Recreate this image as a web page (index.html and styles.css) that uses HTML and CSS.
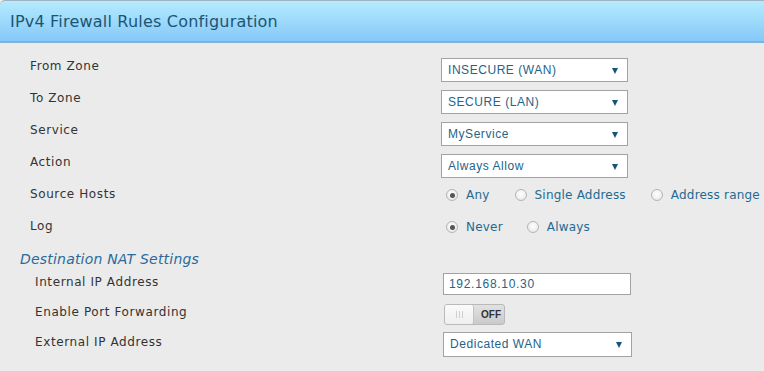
FILE: index.html
```html
<!DOCTYPE html>
<html>
<head>
<meta charset="utf-8">
<link rel="stylesheet" href="styles.css">
</head>
<body>
<div class="panel">
  <div class="header"><h1 class="title">IPv4 Firewall Rules Configuration</h1></div>
  <div class="form">
    <div class="row">
      <div class="label">From Zone</div>
      <div class="ctl"><div class="select"><span>INSECURE (WAN)</span><i class="arrow"></i></div></div>
    </div>
    <div class="row">
      <div class="label">To Zone</div>
      <div class="ctl"><div class="select"><span>SECURE (LAN)</span><i class="arrow"></i></div></div>
    </div>
    <div class="row">
      <div class="label">Service</div>
      <div class="ctl"><div class="select"><span>MyService</span><i class="arrow"></i></div></div>
    </div>
    <div class="row">
      <div class="label">Action</div>
      <div class="ctl"><div class="select"><span>Always Allow</span><i class="arrow"></i></div></div>
    </div>
    <div class="row row-radio">
      <div class="label">Source Hosts</div>
      <div class="ctl radios">
        <label class="radio r-any"><i class="dot checked"></i>Any</label>
        <label class="radio r-single"><i class="dot"></i>Single Address</label>
        <label class="radio"><i class="dot"></i>Address range</label>
      </div>
    </div>
    <div class="row row-radio">
      <div class="label">Log</div>
      <div class="ctl radios">
        <label class="radio r-never"><i class="dot checked"></i>Never</label>
        <label class="radio"><i class="dot"></i>Always</label>
      </div>
    </div>
  </div>
  <h2 class="section">Destination NAT Settings</h2>
  <div class="form form2">
    <div class="row2">
      <div class="label">Internal IP Address</div>
      <div class="ctl2"><div class="input">192.168.10.30</div></div>
    </div>
    <div class="row2">
      <div class="label">Enable Port Forwarding</div>
      <div class="ctl2">
        <div class="toggle"><span class="knob"><i></i><i></i><i></i></span><span class="off">OFF</span></div>
      </div>
    </div>
    <div class="row2">
      <div class="label">External IP Address</div>
      <div class="ctl2"><div class="select select2"><span>Dedicated WAN</span><i class="arrow"></i></div></div>
    </div>
  </div>
</div>
</body>
</html>
```

FILE: styles.css
```css
html, body {
  margin: 0;
  padding: 0;
  background: #ebebeb;
}
body {
  width: 764px;
  height: 371px;
  overflow: hidden;
  font-family: "DejaVu Sans", Verdana, sans-serif;
}
.panel {
  width: 800px;
}
.header {
  height: 40px;
  border-top: 1px solid #9fb3c2;
  border-bottom: 2px solid #7fb3d8;
  border-top-left-radius: 5px;
  background: linear-gradient(to bottom, #b4ebfd 0%, #86c8f9 100%);
  display: flex;
  align-items: center;
}
.title {
  margin: 0 0 0 10px;
  font-weight: normal;
  font-size: 16px;
  letter-spacing: 0.2px;
  color: #1b5574;
}
.form {
  padding: 11px 0 0 30px;
}
.row {
  display: flex;
  align-items: center;
  height: 32px;
}
.label {
  width: 411px;
  font-size: 12px;
  letter-spacing: 0.6px;
  color: #333;
  padding-bottom: 8px;
}
.select {
  height: 22px;
  border: 1px solid #a2a2a2;
  background: #fff;
  display: flex;
  align-items: center;
  justify-content: space-between;
  padding: 0 9px 0 6px;
  box-sizing: content-box;
  width: 170px;
  font-family: "Liberation Sans", Arial, sans-serif;
  font-size: 12px;
  letter-spacing: 0.55px;
  color: #23648a;
}
.arrow {
  width: 0;
  height: 0;
  border-left: 3.5px solid transparent;
  border-right: 3.5px solid transparent;
  border-top: 6px solid #14557c;
  margin-top: 1px;
}
.row-radio .label {
  padding-bottom: 8px;
}
.radios {
  display: flex;
  align-items: center;
  margin-left: 5px;
  padding-bottom: 6px;
}
.radio {
  display: flex;
  align-items: center;
  font-size: 12px;
  letter-spacing: 0.2px;
  color: #1f6a92;
}
.r-any { margin-right: 25px; }
.r-single { margin-right: 25px; }
.r-never { margin-right: 24px; }
.dot {
  width: 12px;
  height: 12px;
  border-radius: 50%;
  border: 1px solid #b5b5b5;
  background: radial-gradient(circle at 50% 40%, #ffffff 0%, #ececec 70%, #dcdcdc 100%);
  margin-right: 8px;
  position: relative;
  box-sizing: border-box;
}
.dot.checked::after {
  content: "";
  position: absolute;
  left: 2.5px;
  top: 2.5px;
  width: 5px;
  height: 5px;
  border-radius: 50%;
  background: #555;
}
.section {
  margin: 4px 0 0 20px;
  font-weight: normal;
  font-style: italic;
  font-size: 14px;
  letter-spacing: 0.2px;
  color: #2a6a9a;
  height: 18px;
  line-height: 18px;
}
.form2 {
  padding: 1px 0 0 35px;
}
.row2 {
  display: flex;
  align-items: center;
  height: 30px;
}
.row2 .label {
  width: 408px;
  padding-bottom: 5px;
}
.input {
  width: 176px;
  height: 20px;
  line-height: 20px;
  border: 1px solid #a2a2a2;
  background: #fff;
  padding: 0 5px;
  font-family: "Liberation Sans", Arial, sans-serif;
  font-size: 12px;
  letter-spacing: 0.7px;
  color: #23648a;
}
.toggle {
  margin-left: 1px;
  width: 59px;
  height: 19px;
  border: 1px solid #b9b9b9;
  border-radius: 3px;
  background: linear-gradient(to bottom, #e2e2e2, #cacaca);
  display: flex;
  align-items: center;
  position: relative;
}
.knob {
  width: 28px;
  height: 19px;
  background: linear-gradient(to bottom, #fafafa, #efefef);
  border-right: 1px solid #c4c4c4;
  border-radius: 2px;
  display: flex;
  align-items: center;
  justify-content: center;
  gap: 2px;
}
.knob i {
  width: 1px;
  height: 7px;
  background: #cfcfcf;
}
.off {
  margin-left: 7px;
  font-family: "Liberation Sans", Arial, sans-serif;
  font-weight: bold;
  font-size: 10px;
  color: #333;
}
.select2 {
  width: 172px;
  height: 23px;
}
```
